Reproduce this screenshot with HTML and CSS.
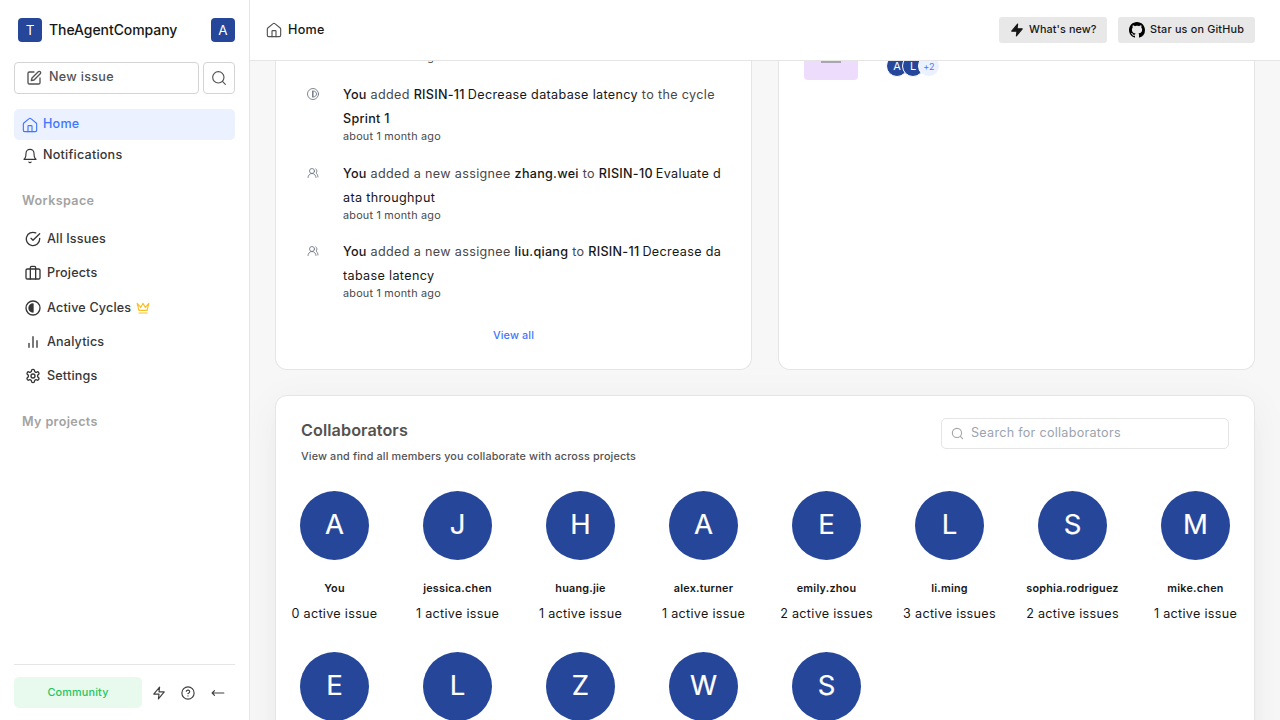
FILE: index.html
```html
<!DOCTYPE html>
<html lang="en">
<head>
<meta charset="utf-8">
<title>Home</title>
<link rel="stylesheet" href="styles.css">
</head>
<body>
<svg class="defs" width="0" height="0">
  <symbol id="home" viewBox="0 0 24 24"><path d="M15 22v-8a1 1 0 0 0-1-1h-4a1 1 0 0 0-1 1v8"/><path d="M2 10.500a2 2 0 0 1 .700-1.500l8-6.500a2 2 0 0 1 2.600 0l8 6.500a2 2 0 0 1 .700 1.500V20a2 2 0 0 1-2 2H4a2 2 0 0 1-2-2z"/></symbol>
  <symbol id="search" viewBox="0 0 24 24"><circle cx="11" cy="11" r="8.500"/><path d="m21.500 21.500-4.300-4.300"/></symbol>
  <symbol id="zap" viewBox="0 0 24 24"><path d="M13 2 3 14h9l-1 8 10-12h-9l1-8z"/></symbol>
  <symbol id="users" viewBox="0 0 24 24"><path d="M18 21a8 8 0 0 0-16 0"/><circle cx="10" cy="8" r="5"/><path d="M22 20c0-3.370-2-6.500-4-8a5 5 0 0 0-.450-8.300"/></symbol>
</svg>
<div class="app">
  <aside class="sidebar">
    <div class="workspace">
      <span class="square">T</span><span class="workspace-name">TheAgentCompany</span><span class="square user">A</span>
    </div>
    <div class="actions">
      <div class="new-issue"><svg class="icon i16" viewBox="0 0 24 24"><path d="M12 3H5a2 2 0 0 0-2 2v14a2 2 0 0 0 2 2h14a2 2 0 0 0 2-2v-7"/><path d="M18.375 2.625a2.121 2.121 0 1 1 3 3L12 15l-4 1 1-4Z"/></svg><span>New issue</span></div>
      <div class="search-button"><svg class="icon i16 thin"><use href="#search"/></svg></div>
    </div>
    <nav class="primary">
      <a class="link active"><svg class="icon i16 thin"><use href="#home"/></svg><span>Home</span></a>
      <a class="link"><svg class="icon i16 thin" viewBox="0 0 24 24"><path d="M6 8a6 6 0 0 1 12 0c0 7 3 9 3 9H3s3-2 3-9"/><path d="M10.300 21a1.940 1.940 0 0 0 3.400 0"/></svg><span>Notifications</span></a>
    </nav>
    <h3 class="section">Workspace</h3>
    <nav class="secondary">
      <a class="item"><svg class="icon i16" viewBox="0 0 24 24"><path d="M22 11.080V12a10 10 0 1 1-5.930-9.140"/><path d="m9 11 3 3L22 4"/></svg><span>All Issues</span></a>
      <a class="item"><svg class="icon i16" viewBox="0 0 24 24"><rect x="1.500" y="6" width="21" height="15" rx="2"/><path d="M16 21V4a2 2 0 0 0-2-2h-4a2 2 0 0 0-2 2v17"/></svg><span>Projects</span></a>
      <a class="item"><svg class="icon i16" viewBox="0 0 24 24"><circle cx="12" cy="12" r="10.500"/><path class="solid" d="M12 6a6 6 0 0 0 0 12z"/></svg><span>Active Cycles</span><svg class="icon crown" viewBox="0 0 24 24"><path d="m2 4 3 12h14l3-12-6 7-4-7-4 7-6-7z"/><path d="M5 20.500h14"/></svg></a>
      <a class="item"><svg class="icon i16" viewBox="0 0 24 24"><path d="M18 20V10M12 20V4M6 20v-6"/></svg><span>Analytics</span></a>
      <a class="item"><svg class="icon i16" viewBox="0 0 24 24"><path d="M12.220 2h-.440a2 2 0 0 0-2 2v.180a2 2 0 0 1-1 1.730l-.430.250a2 2 0 0 1-2 0l-.150-.080a2 2 0 0 0-2.730.730l-.220.380a2 2 0 0 0 .730 2.730l.150.100a2 2 0 0 1 1 1.720v.510a2 2 0 0 1-1 1.740l-.150.090a2 2 0 0 0-.730 2.730l.220.380a2 2 0 0 0 2.730.730l.150-.080a2 2 0 0 1 2 0l.430.250a2 2 0 0 1 1 1.730V20a2 2 0 0 0 2 2h.440a2 2 0 0 0 2-2v-.180a2 2 0 0 1 1-1.730l.430-.250a2 2 0 0 1 2 0l.150.080a2 2 0 0 0 2.730-.730l.220-.390a2 2 0 0 0-.730-2.730l-.150-.080a2 2 0 0 1-1-1.740v-.500a2 2 0 0 1 1-1.740l.150-.090a2 2 0 0 0 .730-2.730l-.220-.380a2 2 0 0 0-2.730-.730l-.150.080a2 2 0 0 1-2 0l-.430-.250a2 2 0 0 1-1-1.730V4a2 2 0 0 0-2-2z"/><circle cx="12" cy="12" r="3"/></svg><span>Settings</span></a>
    </nav>
    <h3 class="section projects">My projects</h3>
    <footer class="foot">
      <span class="community">Community</span>
      <svg class="icon i14"><use href="#zap"/></svg>
      <svg class="icon i14" viewBox="0 0 24 24"><circle cx="12" cy="12" r="10.500"/><path d="M9.090 9a3 3 0 0 1 5.830 1c0 2-3 3-3 3M12 17h.010"/></svg>
      <svg class="icon i14" viewBox="0 0 24 24"><path d="m6 8-4 4 4 4M2 12h20"/></svg>
    </footer>
  </aside>
  <main class="main">
    <header class="topbar">
      <svg class="icon i16 thin"><use href="#home"/></svg><span class="crumb">Home</span>
      <a class="chip"><svg class="icon i14 filled"><use href="#zap"/></svg><span>What's new?</span></a>
      <a class="chip star"><svg class="github" viewBox="0 0 16 16"><path d="M8 0C3.580 0 0 3.580 0 8c0 3.540 2.290 6.530 5.470 7.590.4.070.55-.17.55-.38 0-.19-.01-.82-.01-1.490-2.010.37-2.530-.49-2.690-.94-.09-.23-.48-.94-.82-1.130-.28-.15-.68-.52-.01-.53.63-.01 1.080.58 1.230.82.72 1.210 1.870.87 2.330.66.07-.52.28-.87.51-1.070-1.780-.2-3.640-.89-3.640-3.950 0-.87.31-1.590.82-2.150-.08-.2-.36-1.020.08-2.120 0 0 .67-.21 2.200.82.64-.18 1.320-.27 2-.27s1.360.09 2 .27c1.530-1.040 2.200-.82 2.200-.82.44 1.100.16 1.920.08 2.120.51.56.82 1.270.82 2.150 0 3.070-1.870 3.750-3.650 3.950.29.25.54.73.54 1.480 0 1.070-.01 1.930-.01 2.200 0 .21.15.46.55.38A8.010 8.010 0 0 0 16 8c0-4.420-3.580-8-8-8z"/></svg><span>Star us on GitHub</span></a>
    </header>
    <section class="content">
      <div class="row">
        <article class="card activity">
          <div class="event"><div class="event-text"><p>&nbsp;</p><time>about 1 month ago</time></div></div>
          <div class="event"><svg class="icon event-icon" viewBox="0 0 24 24"><circle cx="12" cy="12" r="11"/><path d="M11 6v12M13 6c4.500 1 6 3 6 6s-1.500 5-6 6z"/></svg><div class="event-text"><p><b>You</b> added <b>RISIN-11</b><i>Decrease database latency</i> to the cycle<br><b>Sprint 1</b></p><time>about 1 month ago</time></div></div>
          <div class="event"><svg class="icon event-icon"><use href="#users"/></svg><div class="event-text"><p><b>You</b> added a new assignee <b>zhang.wei</b> to <b>RISIN-10</b><i>Evaluate d<br></i><i class="rest">ata throughput</i></p><time>about 1 month ago</time></div></div>
          <div class="event last"><svg class="icon event-icon"><use href="#users"/></svg><div class="event-text"><p><b>You</b> added a new assignee <b>liu.qiang</b> to <b>RISIN-11</b><i>Decrease da<br></i><i class="rest">tabase latency</i></p><time>about 1 month ago</time></div></div>
          <a class="view-all">View all</a>
        </article>
        <article class="card recent">
          <div class="project-tile"><span class="tile-mark"></span></div>
          <div class="stack"><span>A</span><span>L</span><span class="more">+2</span></div>
        </article>
      </div>
      <article class="card collaborators">
        <div class="card-head">
          <div><h2>Collaborators</h2><p>View and find all members you collaborate with across projects</p></div>
          <div class="field"><svg class="icon i13"><use href="#search"/></svg><span>Search for collaborators</span></div>
        </div>
        <div class="people">
          <div class="person"><span class="avatar">A</span><strong>You</strong><em>0 active issue</em></div>
          <div class="person"><span class="avatar">J</span><strong>jessica.chen</strong><em>1 active issue</em></div>
          <div class="person"><span class="avatar">H</span><strong>huang.jie</strong><em>1 active issue</em></div>
          <div class="person"><span class="avatar">A</span><strong>alex.turner</strong><em>1 active issue</em></div>
          <div class="person"><span class="avatar">E</span><strong>emily.zhou</strong><em>2 active issues</em></div>
          <div class="person"><span class="avatar">L</span><strong>li.ming</strong><em>3 active issues</em></div>
          <div class="person"><span class="avatar">S</span><strong>sophia.rodriguez</strong><em>2 active issues</em></div>
          <div class="person"><span class="avatar">M</span><strong>mike.chen</strong><em>1 active issue</em></div>
          <div class="person"><span class="avatar">E</span></div>
          <div class="person"><span class="avatar">L</span></div>
          <div class="person"><span class="avatar">Z</span></div>
          <div class="person"><span class="avatar">W</span></div>
          <div class="person"><span class="avatar">S</span></div>
        </div>
      </article>
    </section>
  </main>
</div>
</body>
</html>
```
FILE: styles.css
```css
* { box-sizing: border-box; }
body { margin: 0; font-family: Inter, sans-serif; font-size: 12.6px; letter-spacing: .3px; color: #171717; background: #fff; }
h2, h3, p { margin: 0; }
.defs { position: absolute; }
.app { display: flex; width: 1280px; height: 720px; overflow: hidden; }
.icon { fill: none; stroke: currentColor; stroke-width: 2; stroke-linecap: round; stroke-linejoin: round; flex: none; }
.thin { stroke-width: 1.700; }
.i16 { width: 16px; height: 16px; }
.i14 { width: 14px; height: 14px; }
.i13 { width: 13px; height: 13px; }
.solid { fill: currentColor; }

.sidebar { width: 250px; flex: none; border-right: 1px solid #e5e5e5; padding: 0 14px; display: flex; flex-direction: column; }
.workspace { height: 24px; margin-top: 18px; padding-left: 4px; display: flex; align-items: center; }
.workspace-name { font-size: 14px; letter-spacing: -.07px; font-weight: 500; margin-left: 7px; padding-bottom: 1px; }
.square { width: 24px; height: 24px; border-radius: 4px; background: #254699; color: #fff; font-size: 13.500px; letter-spacing: 0; line-height: 24px; text-align: center; }
.square.user { margin-left: auto; }
.actions { display: flex; gap: 4px; margin-top: 20px; height: 32px; color: #525252; }
.new-issue { flex: 1; display: flex; align-items: center; gap: 7px; padding-left: 11px; border: 1px solid #d4d4d4; border-radius: 4px; font-weight: 500; }
.new-issue span { padding-bottom: 3px; }
.link span { padding-bottom: 2px; }
.search-button { width: 32px; border: 1px solid #d4d4d4; border-radius: 4px; display: flex; align-items: center; justify-content: center; }
.primary { margin-top: 15px; letter-spacing: .22px; }
.link { height: 31px; padding: 0 8px; display: flex; align-items: center; gap: 5px; border-radius: 5px; font-weight: 500; color: #363636; }
.link.active { background: #ebf1ff; color: #3f76ff; }
.section { font-size: 12.6px; letter-spacing: .36px; font-weight: 600; color: #a3a3a3; line-height: 18px; margin: 21px 0 0 8px; }
.secondary { margin-top: 12px; letter-spacing: .16px; }
.item { height: 34.300px; display: flex; align-items: center; gap: 6px; padding-left: 11px; font-weight: 500; color: #363636; }
.item span { padding-bottom: 1px; }
.crown { width: 14px; height: 14px; color: #fbbf24; margin-left: -1.500px; }
.section.projects { margin-top: 20px; }
.foot { margin-top: auto; height: 56px; border-top: 1px solid #e5e5e5; display: flex; align-items: center; gap: 15.500px; color: #404040; }
.community { width: 128px; height: 31px; margin-right: -6px; line-height: 31px; border-radius: 5px; background: #e8f9ee; color: #22c55e; text-align: center; font-size: 10.800px; letter-spacing: .2px; font-weight: 500; }

.main { flex: 1; min-width: 0; display: flex; flex-direction: column; }
.topbar { height: 61px; flex: none; border-bottom: 1px solid #e5e5e5; padding: 0 25px 0 16px; display: flex; align-items: center; color: #525252; }
.crumb { color: #171717; font-weight: 500; margin: 0 auto 0 6px; padding-bottom: 1px; }
.chip { width: 108px; height: 26px; margin-left: 11px; padding-left: 11px; display: flex; align-items: center; gap: 5px; border-radius: 3px; background: #e8e8e8; color: #171717; font-size: 10.800px; letter-spacing: .1px; font-weight: 500; white-space: nowrap; }
.chip.star { width: 137px; letter-spacing: .2px; }
.chip span { padding-bottom: 1px; }
.filled { fill: currentColor; }
.github { width: 16px; height: 16px; fill: #000; flex: none; }
.content { flex: 1; min-height: 0; background: #f7f7f7; padding: 0 25px; overflow: hidden; }
.row { display: grid; grid-template-columns: 1fr 1fr; gap: 26px; height: 309px; }
.card { background: #fff; border: 1px solid #e5e5e5; border-radius: 12px; min-width: 0; }
.row .card { border-top: 0; border-radius: 0 0 12px 12px; overflow: hidden; }
.activity { display: flex; flex-direction: column; justify-content: flex-end; padding: 0 25px; }
.event { flex: none; height: 79px; display: grid; grid-template-columns: 42px 1fr; }
.event:nth-child(3) { height: 78px; }
.event-text { grid-column: 2; white-space: nowrap; color: #484848; letter-spacing: .34px; }
.event p { line-height: 24px; padding-top: 1px; }
.event:first-child p { height: 49px; }
.event b { font-weight: 500; color: #171717; letter-spacing: .27px; }
.event i { font-style: normal; color: #171717; margin-left: 3px; }
.event .rest { margin-left: 0; }
.event time { display: block; font-size: 10.800px; letter-spacing: .23px; line-height: 12px; }
.event-icon { width: 12px; height: 12px; margin: 6px 0 0 6px; color: #6b7280; grid-row: 1; stroke-width: 1.700; }
.view-all { text-align: center; color: #3f76ff; font-size: 10.800px; letter-spacing: .15px; font-weight: 500; line-height: 16px; margin: 10px 0 25px; }
.recent { display: flex; align-items: flex-start; padding-left: 25px; }
.project-tile { width: 54px; height: 19px; background: #eddcfc; border-radius: 0 0 4px 4px; display: flex; justify-content: center; }
.tile-mark { width: 20px; height: 2px; background: #aaa5b0; }
.stack { display: flex; margin: -6px 0 0 28px; }
.stack span { width: 22px; height: 22px; margin-right: -6px; border: 1px solid #fff; border-radius: 50%; background: #254699; color: #fff; font-size: 11px; letter-spacing: 0; line-height: 20px; text-align: center; }
.stack .more { background: #ebf1ff; color: #3f76ff; font-size: 9px; letter-spacing: .3px; line-height: 22px; }

.collaborators { margin-top: 25px; height: 440px; box-shadow: 0 8px 40px rgba(0,0,0,.05), 0 12px 32px -16px rgba(0,0,0,.05); }
.card-head { display: flex; justify-content: space-between; padding: 22px 25px 0; height: 95px; }
.card-head h2 { font-size: 16.200px; letter-spacing: .08px; line-height: 24px; font-weight: 600; color: #525252; }
.card-head p { font-size: 10.800px; letter-spacing: .15px; line-height: 16px; margin-top: 7px; font-weight: 500; color: #525252; }
.field { width: 288px; height: 31px; border: 1px solid #e5e5e5; border-radius: 5px; display: flex; align-items: center; gap: 7px; padding-left: 9px; color: #a3a3a3; }
.field span { color: #9ca3af; padding-bottom: 2px; letter-spacing: .27px; }
.people { display: grid; grid-template-columns: repeat(8, 123px); grid-auto-rows: 161px; margin-left: -3px; }
.person { display: flex; flex-direction: column; align-items: center; white-space: nowrap; }
.avatar { width: 69px; height: 69px; border-radius: 50%; background: #254699; color: #fff; font-size: 27.500px; letter-spacing: 0; line-height: 67px; text-align: center; -webkit-text-stroke: .2px #fff; }
.person strong { font-size: 10.800px; letter-spacing: .24px; line-height: 16px; font-weight: 600; margin-top: 21px; }
.person em { font-style: normal; line-height: 18px; margin-top: 8px; }
```
